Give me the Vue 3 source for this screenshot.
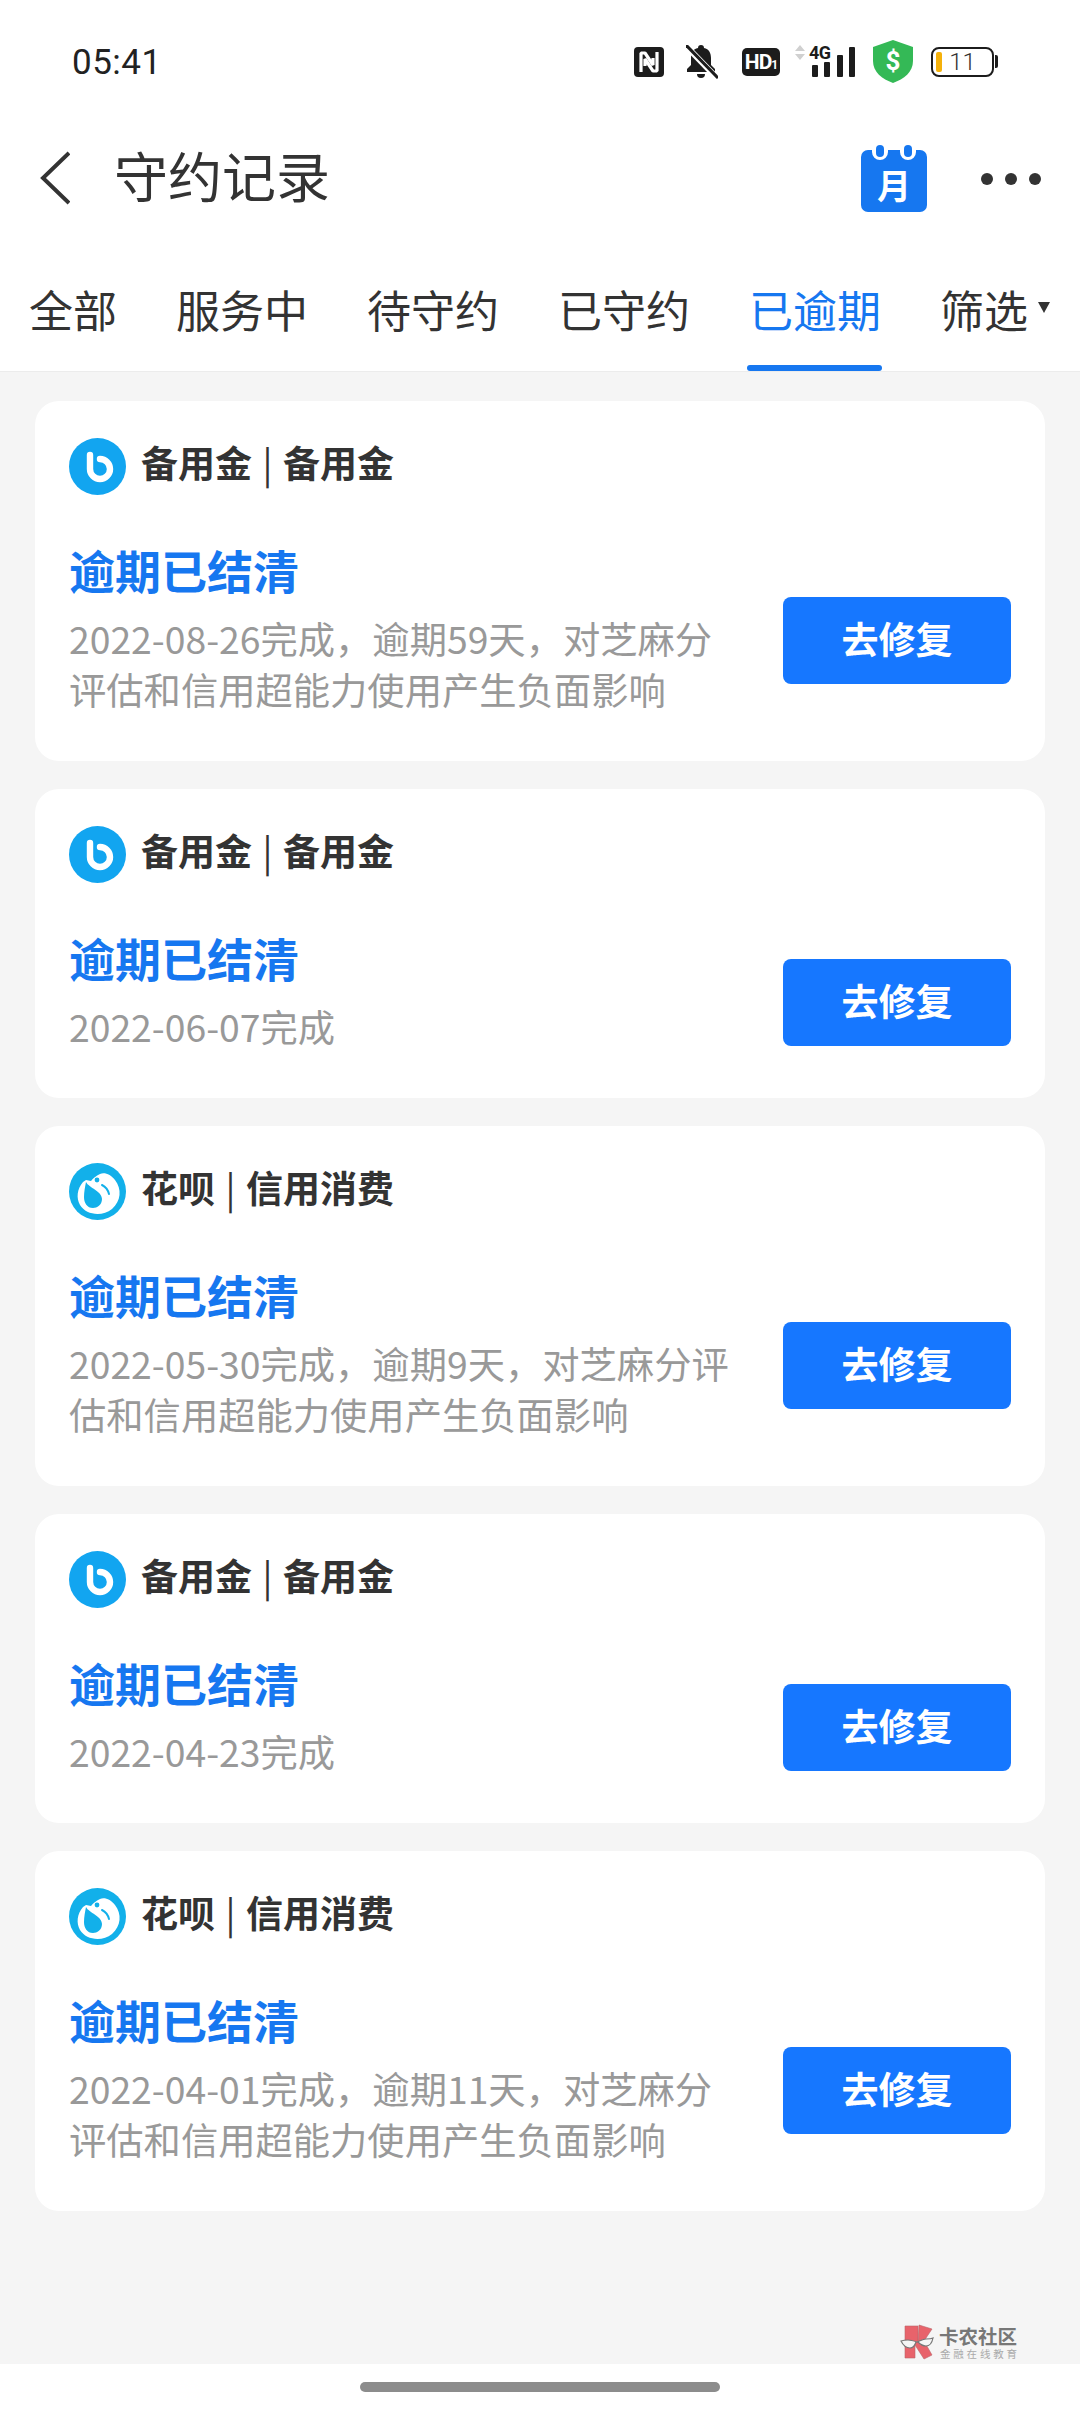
<script setup>
const tabs = [
  { label: '全部' },
  { label: '服务中' },
  { label: '待守约' },
  { label: '已守约' },
  { label: '已逾期', active: true },
]
const cards = [
  { type: 'b', name: '备用金', cat: '备用金', desc: ['2022-08-26完成，逾期59天，对芝麻分', '评估和信用超能力使用产生负面影响'] },
  { type: 'b', name: '备用金', cat: '备用金', desc: ['2022-06-07完成'] },
  { type: 'h', name: '花呗', cat: '信用消费', desc: ['2022-05-30完成，逾期9天，对芝麻分评', '估和信用超能力使用产生负面影响'] },
  { type: 'b', name: '备用金', cat: '备用金', desc: ['2022-04-23完成'] },
  { type: 'h', name: '花呗', cat: '信用消费', desc: ['2022-04-01完成，逾期11天，对芝麻分', '评估和信用超能力使用产生负面影响'] },
]
</script>

<template>
  <div class="page">
    <div class="top">
      <div class="status">
        <span class="time">05:41</span>
        <div class="status-icons">
          <svg class="i-nfc" width="30" height="30" viewBox="0 0 30 30">
            <rect width="30" height="30" rx="4" fill="#1c1c1c" />
            <path d="M7 25V6h4l8 12V11" fill="none" stroke="#fff" stroke-width="3.2" stroke-linejoin="bevel" />
            <path d="M23 5v19h-4l-8-12v7" fill="none" stroke="#fff" stroke-width="3.2" stroke-linejoin="bevel" />
          </svg>
          <svg class="i-bell" width="32" height="34" viewBox="0 0 32 34">
            <path d="M15 0c2 0 3 1 3 3 5 1 7 5 7 10v7l4 4v3H1v-3l4-4v-7c0-5 2-9 7-10 0-2 1-3 3-3z" fill="#1c1c1c" />
            <path d="M11 29h8a4 4 0 0 1-8 0z" fill="#1c1c1c" />
            <path d="M0 1l31 32" stroke="#fff" stroke-width="6" />
            <path d="M0 0l32 33" stroke="#1c1c1c" stroke-width="3" />
          </svg>
          <div class="hd">HD<small>1</small></div>
          <div class="net">
            <svg class="arrows" width="10" height="15" viewBox="0 0 10 15">
              <path d="M5 0l5 6H0zM5 15l5-6H0z" fill="#d0d0d0" />
            </svg>
            <span class="g4">4G</span>
            <span class="bar b1"></span><span class="bar b2"></span><span class="bar b3"></span><span class="bar b4"></span>
          </div>
          <svg class="i-shield" width="40" height="43" viewBox="0 0 40 43">
            <path d="M20 0l20 7v14c0 11-9 18-20 22C9 39 0 32 0 21V7z" fill="#34b956" />
            <text x="20" y="30" text-anchor="middle" class="dollar">$</text>
          </svg>
          <div class="batt">
            <div class="batt-body"><span class="batt-level"></span><span class="batt-num">11</span></div>
            <span class="batt-tip"></span>
          </div>
        </div>
      </div>

      <div class="nav">
        <svg class="back" width="30" height="54" viewBox="0 0 30 54">
          <path d="M29 2L3 27l26 25" fill="none" stroke="#333" stroke-width="4" />
        </svg>
        <h1 class="title">守约记录</h1>
        <svg class="cal" width="66" height="67" viewBox="0 0 66 67">
          <rect x="0" y="5" width="66" height="62" rx="7" fill="#1677f0" />
          <path d="M11 3v4a8 8 0 0 0 16 0V3zM39 3v4a8 8 0 0 0 16 0V3z" fill="#fff" />
          <rect x="15" y="0" width="8" height="12" rx="4" fill="#1677f0" />
          <rect x="43" y="0" width="8" height="12" rx="4" fill="#1677f0" />
          <text x="33" y="54" text-anchor="middle" class="cal-t">月</text>
        </svg>
        <div class="dots"><i></i><i></i><i></i></div>
      </div>

      <div class="tabs">
        <div v-for="t in tabs" :key="t.label" class="tab" :class="{ active: t.active }">{{ t.label }}</div>
        <div class="tab filter">筛选<span class="tri"></span></div>
      </div>
    </div>

    <div class="list">
      <div v-for="(c, i) in cards" :key="i" class="card">
        <div class="head">
          <svg v-if="c.type === 'b'" class="logo" width="57" height="57" viewBox="0 0 57 57">
            <circle cx="28.500" cy="28.500" r="28.500" fill="#12a5f0" />
            <path d="M21 17V31A10 10 0 1 0 31 21" fill="none" stroke="#fff" stroke-width="6.400" stroke-linecap="round" />
          </svg>
          <svg v-else class="logo" width="57" height="57" viewBox="0 0 57 57">
            <circle cx="28.500" cy="28.500" r="28.500" fill="#12b0ea" />
            <path d="M14 19C8 26 7 35 11 42C17 52 33 54 43 46C52 38 53 26 46 17C42 12 36 9 31 11C27 13 24 15 22 18L17 17z" fill="#fff" />
            <path d="M17 19C20 25 33 28 33 36C33 42 28 45 24 45C18 45 15 40 15 34C15 29 16 24 17 19z" fill="#12b0ea" />
            <circle cx="28" cy="17" r="2.400" fill="#12b0ea" />
            <path d="M33 22C37 24 39 27 40 31" fill="none" stroke="#12b0ea" stroke-width="2" stroke-linecap="round" />
          </svg>
          <span class="name">{{ c.name }}<span class="sep">|</span>{{ c.cat }}</span>
        </div>
        <div class="body">
          <div class="info">
            <div class="status-title">逾期已结清</div>
            <div class="desc">
              <div v-for="line in c.desc" :key="line">{{ line }}</div>
            </div>
          </div>
          <div class="btn">去修复</div>
        </div>
      </div>
    </div>

    <div class="mark">
      <svg class="mark-logo" width="34" height="36" viewBox="0 0 34 36">
        <path d="M5 2h13v17l1-18 13 4-8 12 8 14-8 4-9-14v13H5z" fill="#e8636b" stroke="#b9646a" stroke-width=".6" />
        <path d="M1 17c3-1 5-1 7-1 3 0 6 1 9 2 3-1 6-3 9-3 2 0 5 0 7-1-1 5-3 8-7 8-4 0-6-2-8-4h-2c-1 3-3 6-6 6-4 0-7-3-9-7z" fill="#f5f5f5" stroke="#777" stroke-width="1.200" />
      </svg>
      <div class="mark-text">
        <div class="mark-a">卡农社区</div>
        <div class="mark-b">金融在线教育</div>
      </div>
    </div>

    <div class="home"><span></span></div>
  </div>
</template>

<style>
html, body { margin: 0; padding: 0; background: #f5f5f5; }
</style>

<style scoped>
.page {
  position: relative;
  width: 1080px;
  height: 2412px;
  overflow: hidden;
  background: #f5f5f5;
  font-family: "Noto Sans CJK SC", "Noto Sans", sans-serif;
  color: #333;
}
.top { background: #fff; height: 372px; border-bottom: 1px solid #ececec; box-sizing: border-box; }
.status {
  height: 122px;
  display: flex;
  align-items: center;
  justify-content: space-between;
  padding: 0 82px 0 72px;
}
.time { font: 400 35px Roboto, sans-serif; letter-spacing: .5px; color: #222; margin-top: 2px; }
.status-icons { display: flex; align-items: center; margin-top: 1px; }
.i-nfc { margin-right: 22px; }
.i-bell { margin-right: 24px; }
.hd {
  width: 38px; height: 28px; border-radius: 5px; background: #1c1c1c; color: #fff;
  font: 700 21px/28px Roboto, sans-serif; text-align: center; margin-right: 15px; letter-spacing: -1px;
}
.hd small { font-size: 12px; }
.net {
  position: relative; display: flex; align-items: flex-end; justify-content: flex-end;
  height: 30px; width: 60px; gap: 6.500px; margin-right: 18px;
}
.arrows { position: absolute; left: 0; top: -2px; }
.g4 { position: absolute; left: 14px; top: -4px; font: 700 18px/20px Roboto, sans-serif; color: #1c1c1c; letter-spacing: -.5px; }
.bar { width: 6px; background: #1c1c1c; border-radius: 1px; }
.b1 { height: 12px; } .b2 { height: 15px; } .b3 { height: 22px; } .b4 { height: 30px; }
.dollar { font: 700 26px Roboto, sans-serif; fill: #fff; }
.i-shield { margin-right: 18px; }
.batt { display: flex; align-items: center; gap: 1px; }
.batt-body {
  position: relative; width: 63px; height: 30px; box-sizing: border-box; border: 2px solid #1c1c1c; border-radius: 8px;
  display: flex; align-items: center; justify-content: center;
}
.batt-level { position: absolute; left: 3px; top: 3px; bottom: 3px; width: 6px; border-radius: 2px; background: #f5b10a; }
.batt-num { font: 300 24px Roboto, sans-serif; color: #333; }
.batt-tip { width: 3px; height: 13px; background: #1c1c1c; border-radius: 0 2px 2px 0; }

.nav { height: 112px; display: flex; align-items: center; padding: 0 39px 0 40px; }
.back { flex: none; margin-right: 44px; }
.title { margin: -6px 0 0; font-size: 54px; font-weight: 400; flex: 1; color: #333; line-height: 70px; }
.cal { flex: none; margin-right: 54px; }
.cal-t { font: 700 34px "Noto Sans CJK SC", sans-serif; fill: #fff; }
.dots { display: flex; gap: 12px; margin-top: 2px; }
.dots i { width: 12px; height: 12px; border-radius: 50%; background: #333; }

.tabs { display: flex; justify-content: space-between; align-items: stretch; padding: 0 30px 0 29px; height: 137px; box-sizing: border-box; }
.tab { position: relative; font-size: 44px; line-height: 60px; padding-top: 45px; color: #333; }
.tab.active { color: #1677f0; }
.tab.active::after {
  content: ""; position: absolute; left: -2px; right: -1px; bottom: 0; height: 6px; background: #1677f0; border-radius: 3px;
}
.filter { display: flex; align-items: flex-start; }
.tri { width: 0; height: 0; border-left: 6px solid transparent; border-right: 6px solid transparent; border-top: 11px solid #333; margin: 23px 0 0 10px; }

.list { padding: 29px 35px 0; display: flex; flex-direction: column; gap: 28px; }
.card { background: #fff; border-radius: 24px; padding: 37px 34px 46px; }
.head { display: flex; align-items: center; gap: 15px; height: 57px; }
.logo { flex: none; }
.name { font-size: 37px; font-weight: 700; color: #333; line-height: 58px; margin-top: -9px; white-space: nowrap; }
.sep { display: inline-block; width: 31px; text-align: center; font-weight: 400; }
.body { display: flex; align-items: center; justify-content: space-between; margin-top: 41px; }
.info { flex: 1; }
.status-title { font-size: 46px; font-weight: 700; color: #1677f0; line-height: 66px; }
.desc { font-size: 37.300px; color: #999; line-height: 51px; margin-top: 11px; white-space: nowrap; }
.btn {
  flex: none; width: 228px; height: 87px; margin-top: 29px; border-radius: 8px; background: #1677ff; color: #fff;
  font-size: 37px; font-weight: 700; line-height: 83px; text-align: center;
}

.mark { position: absolute; left: 900px; top: 2324px; display: flex; align-items: flex-start; gap: 5px; }
.mark-logo { flex: none; }
.mark-text { width: 80px; }
.mark-a { font-size: 19.500px; line-height: 23px; font-weight: 700; color: #777; white-space: nowrap; }
.mark-b { font-size: 10.500px; line-height: 13px; color: #aaa; letter-spacing: 2.800px; white-space: nowrap; padding-left: 1px; }

.home { position: absolute; left: 0; right: 0; bottom: 0; height: 48px; background: #fff; display: flex; justify-content: center; align-items: center; }
.home span { width: 360px; height: 10px; border-radius: 5px; background: #8c8c8c; margin-top: -2px; }
</style>
